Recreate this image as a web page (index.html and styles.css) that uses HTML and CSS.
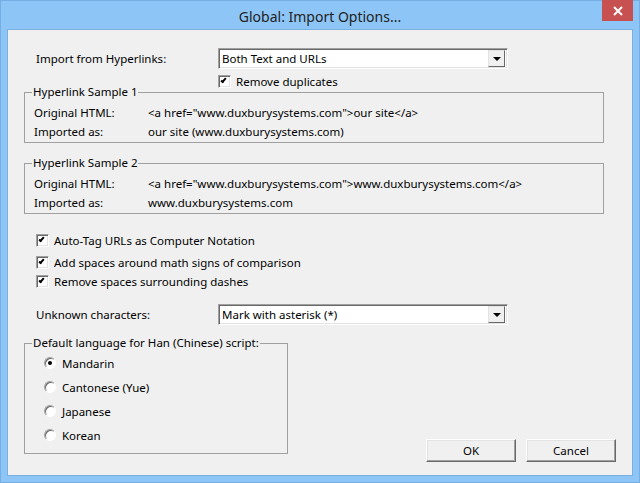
FILE: index.html
```html
<!DOCTYPE html>
<html lang="en">
<head>
    <meta charset="UTF-8">
    <title>Global: Import Options...</title>
    <link rel="stylesheet" href="styles.css">
</head>
<body>

    <div class="window">
        <div class="titlebar">
            <span class="title">Global: Import Options...</span>
            <button class="close-btn" aria-label="Close">
                <svg width="10" height="10" viewBox="0 0 10 10">
                    <path d="M1 1 L9 9 M9 1 L1 9" stroke="#fff" stroke-width="2" fill="none"/>
                </svg>
            </button>
        </div>

        <div class="client">
            <div class="field-row import-row">
                <span class="field-label">Import from Hyperlinks:</span>
                <div class="combo">
                    <span class="combo-text">Both Text and URLs</span>
                    <span class="combo-btn"><span class="arrow"></span></span>
                </div>
            </div>

            <label class="check dup-check">
                <span class="box checked"></span>
                <span>Remove duplicates</span>
            </label>

            <fieldset class="group sample-group">
                <legend>Hyperlink Sample 1</legend>
                <div class="sample-row">
                    <span class="key">Original HTML:</span>
                    <span>&lt;a href="www.duxburysystems.com"&gt;our site&lt;/a&gt;</span>
                </div>
                <div class="sample-row">
                    <span class="key">Imported as:</span>
                    <span>our site (www.duxburysystems.com)</span>
                </div>
            </fieldset>

            <fieldset class="group sample-group second">
                <legend>Hyperlink Sample 2</legend>
                <div class="sample-row">
                    <span class="key">Original HTML:</span>
                    <span>&lt;a href="www.duxburysystems.com"&gt;www.duxburysystems.com&lt;/a&gt;</span>
                </div>
                <div class="sample-row">
                    <span class="key">Imported as:</span>
                    <span>www.duxburysystems.com</span>
                </div>
            </fieldset>

            <div class="options">
                <label class="check opt-1">
                    <span class="box checked"></span>
                    <span>Auto-Tag URLs as Computer Notation</span>
                </label>
                <label class="check opt-2">
                    <span class="box checked"></span>
                    <span>Add spaces around math signs of comparison</span>
                </label>
                <label class="check opt-3">
                    <span class="box checked"></span>
                    <span>Remove spaces surrounding dashes</span>
                </label>
            </div>

            <div class="field-row unknown-row">
                <span class="field-label">Unknown characters:</span>
                <div class="combo">
                    <span class="combo-text">Mark with asterisk (*)</span>
                    <span class="combo-btn"><span class="arrow"></span></span>
                </div>
            </div>

            <div class="bottom">
                <fieldset class="group lang-group">
                    <legend>Default language for Han (Chinese) script:</legend>
                    <label class="radio"><span class="dot selected"></span>Mandarin</label>
                    <label class="radio"><span class="dot"></span>Cantonese (Yue)</label>
                    <label class="radio"><span class="dot"></span>Japanese</label>
                    <label class="radio"><span class="dot"></span>Korean</label>
                </fieldset>

                <div class="buttons">
                    <button class="btn">OK</button>
                    <button class="btn">Cancel</button>
                </div>
            </div>
        </div>
    </div>

</body>
</html>
```

FILE: styles.css
```css
*,
::after,
::before {
    margin: 0;
    padding: 0;
    box-sizing: border-box;
}

html {
    font-family: "Noto Sans", "Open Sans", sans-serif;
    font-size: 11.5px;
    color: #000;
}

body {
    width: 640px;
    height: 483px;
    overflow: hidden;
}

.window {
    width: 640px;
    height: 483px;
    background-color: #8dc6f6;
    border: 1px solid #74aee2;
    display: flex;
    flex-direction: column;
}

.titlebar {
    height: 29px;
    display: flex;
    justify-content: center;
    align-items: center;
    position: relative;
}

.title {
    font-size: 14px;
    color: #222;
    padding-top: 2px;
}

.close-btn {
    position: absolute;
    top: -1px;
    right: 6px;
    width: 31px;
    height: 21px;
    border: none;
    background-color: #c75050;
    display: flex;
    align-items: center;
    justify-content: center;
}

.client {
    width: 624px;
    height: 445px;
    margin-left: 7px;
    background-color: #f0f0f0;
    box-shadow: 0 0 0 1px #7aaedd;
    padding: 0 16px;
    display: flex;
    flex-direction: column;
    align-items: flex-start;
}

/* label + combo rows */
.field-row {
    display: flex;
    align-items: center;
    height: 21px;
}

.import-row {
    margin-top: 18px;
}

.field-label {
    width: 194px;
    padding-left: 12px;
}

.combo {
    width: 290px;
    height: 21px;
    background-color: #fff;
    border: 1px solid;
    border-color: #a0a0a0 #fff #fff #a0a0a0;
    box-shadow: inset 1px 1px 0 #696969, inset -1px -1px 0 #e3e3e3;
    display: flex;
    align-items: center;
    padding: 0 2px 0 3px;
}

.combo-text {
    flex: 1;
    line-height: 17px;
}

.combo-btn {
    width: 17px;
    height: 17px;
    background-color: #f0f0f0;
    border: 1px solid;
    border-color: #e3e3e3 #696969 #696969 #e3e3e3;
    display: flex;
    align-items: center;
    justify-content: center;
}

.arrow {
    width: 0;
    height: 0;
    border-left: 4px solid transparent;
    border-right: 4px solid transparent;
    border-top: 4px solid #000;
    margin-top: 1px;
}

/* checkboxes */
.check {
    display: flex;
    align-items: center;
    height: 13px;
    gap: 5px;
}

.box {
    width: 13px;
    height: 13px;
    background-color: #fff;
    border: 1px solid;
    border-color: #a0a0a0 #fff #fff #a0a0a0;
    box-shadow: inset 1px 1px 0 #696969, inset -1px -1px 0 #e3e3e3;
    position: relative;
}

.box.checked::after {
    content: "";
    position: absolute;
    left: 3px;
    top: 1px;
    width: 3px;
    height: 6px;
    border-right: 2px solid #000;
    border-bottom: 2px solid #000;
    transform: rotate(40deg);
}

.dup-check {
    margin-top: 6px;
    margin-left: 194px;
}

/* group boxes */
.group {
    border: 1px solid #a0a0a0;
    padding: 4px 0 1px 9px;
}

.group legend {
    line-height: 14px;
    margin-left: -2px;
    padding: 0 1px;
}

.sample-group {
    width: 580px;
    margin-top: -3px;
}

.sample-group.second {
    margin-top: 13px;
}

.sample-row {
    display: flex;
    line-height: 19px;
}

.key {
    width: 114px;
}

/* option checkboxes */
.options {
    display: flex;
    flex-direction: column;
    margin-top: 20px;
    padding-left: 12px;
}

.opt-2 {
    margin-top: 9px;
}

.opt-3 {
    margin-top: 6px;
}

.unknown-row {
    margin-top: 16px;
}

/* bottom part */
.bottom {
    display: flex;
    width: 100%;
    margin-top: 11px;
    justify-content: space-between;
    align-items: flex-start;
}

.lang-group {
    width: 264px;
    padding: 1px 0 6px 19px;
}

.lang-group legend {
    margin-left: -12px;
}

.radio {
    display: flex;
    align-items: center;
    height: 24px;
    gap: 6px;
}

.dot {
    width: 12px;
    height: 12px;
    border-radius: 50%;
    background-color: #fff;
    border: 1px solid;
    border-color: #a0a0a0 #fff #fff #a0a0a0;
    box-shadow: inset 1px 1px 0 #696969;
    display: flex;
    align-items: center;
    justify-content: center;
}

.dot.selected::after {
    content: "";
    width: 4px;
    height: 4px;
    border-radius: 50%;
    background-color: #000;
}

.buttons {
    display: flex;
    gap: 10px;
    margin-top: 103px;
}

.btn {
    width: 90px;
    height: 23px;
    font-family: inherit;
    font-size: 11.5px;
    background-color: #f0f0f0;
    border: 1px solid;
    border-color: #fff #696969 #696969 #fff;
    box-shadow: inset -1px -1px 0 #a0a0a0, inset 1px 1px 0 #e3e3e3;
}
```
